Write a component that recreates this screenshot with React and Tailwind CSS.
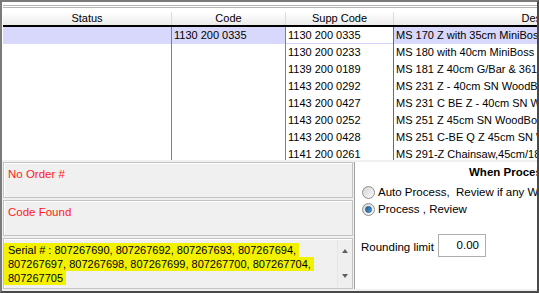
const rows = [
  ["1130 200 0335", "MS 170 Z with 35cm MiniBoss Saw Chain"],
  ["1130 200 0233", "MS 180 with 40cm MiniBoss Saw Chain"],
  ["1139 200 0189", "MS 181 Z 40cm G/Bar & 3610 Chain"],
  ["1143 200 0292", "MS 231 Z - 40cm SN WoodBoss"],
  ["1143 200 0427", "MS 231 C BE Z - 40cm SN WoodBoss"],
  ["1143 200 0252", "MS 251 Z 45cm SN WoodBoss"],
  ["1143 200 0428", "MS 251 C-BE Q Z 45cm SN WoodBoss"],
  ["1141 200 0261", "MS 291-Z Chainsaw,45cm/18\" Bar"],
];

function Radio({ checked, label }) {
  return (
    <div className="flex items-center h-[17px]">
      <div className="w-[13px] h-[13px] rounded-full border border-[#8f8f8f] bg-gradient-to-br from-[#d4d4d4] to-[#fafafa] flex items-center justify-center shrink-0">
        {checked && (
          <div className="w-[7px] h-[7px] rounded-full bg-gradient-to-br from-[#1e5a8c] to-[#4aa3e8] border border-[#2a5d86]" />
        )}
      </div>
      <span className="ml-[3px] whitespace-pre text-[11.5px]">{label}</span>
    </div>
  );
}

export default function App() {
  return (
    <div className="w-[539px] h-[293px] overflow-hidden bg-[#f0f0f0] border-t-2 border-l-2 border-t-[#7a7a7a] border-l-[#7a7a7a] border-r-2 border-b-2 border-r-[#4a4a4a] border-b-[#4a4a4a] flex flex-col text-[11px] leading-[13px] text-black font-['Liberation_Sans',Arial,sans-serif]">
      {/* top strip + table */}
      <div className="bg-white pl-[1px] flex flex-col">
        <div className="h-[10px] flex flex-col">
          <div className="mt-[3px] h-px bg-[#b4b4b4]" />
          <div className="mt-px h-px bg-[#b4b4b4]" />
        </div>
        {/* header */}
        <div className="flex h-[13px] bg-gradient-to-b from-white to-[#ececec] whitespace-nowrap overflow-hidden">
          <div className="w-[169px] shrink-0 border-r border-[#dcdcdc] text-center">Status</div>
          <div className="w-[114px] shrink-0 border-r border-[#dcdcdc] text-center">Code</div>
          <div className="w-[108px] shrink-0 border-r border-[#dcdcdc] text-center">Supp Code</div>
          <div className="w-[310px] shrink-0 text-center">Description</div>
        </div>
        <div className="h-[2px] bg-black" />
        {/* body */}
        <div className="flex h-[133px] overflow-hidden whitespace-nowrap">
          <div className="w-[169px] shrink-0 border-r border-[#808080]">
            <div className="h-[17px] bg-[#d8d8fc]" />
          </div>
          <div className="w-[114px] shrink-0 border-r border-[#808080]">
            <div className="h-[17px] bg-[#d8d8fc] pl-[2px] flex items-center">1130 200 0335</div>
          </div>
          <div className="w-[108px] shrink-0 border-r border-[#6a6a6a]">
            {rows.map(([c], i) => (
              <div
                key={i}
                className={
                  i === 0
                    ? "h-[17px] pl-[2px] flex items-center border-b border-[#d4d4f8]"
                    : "h-[17px] pl-[2px] flex items-center"
                }
              >
                {c}
              </div>
            ))}
          </div>
          <div className="w-[310px] shrink-0">
            {rows.map(([, d], i) => (
              <div
                key={i}
                className={
                  i === 0
                    ? "h-[17px] pl-[2px] flex items-center bg-[#d8d8fc]"
                    : "h-[17px] pl-[2px] flex items-center"
                }
              >
                {d}
              </div>
            ))}
          </div>
        </div>
      </div>

      {/* bottom area */}
      <div className="mt-[2px] h-[127px] flex pl-[1px]">
        <div className="w-[350px] shrink-0 flex flex-col gap-[2px]">
          <div className="h-[36px] border border-[#c3c3c3] shadow-[inset_1px_1px_0_#ffffff] pl-[4px] pt-[5px] text-[11.5px] text-[#ff1a1a]">
            No Order #
          </div>
          <div className="h-[36px] border border-[#c3c3c3] shadow-[inset_1px_1px_0_#ffffff] pl-[4px] pt-[5px] text-[11.5px] text-[#ff1a1a]">
            Code Found
          </div>
          <div className="flex-1 border border-[#c3c3c3] shadow-[inset_1px_1px_0_#ffffff] flex">
            <div className="flex-1 pt-[4px] pr-[8px] text-[11px] leading-[14px]">
              <span className="bg-[#f2f200] box-decoration-clone pl-[4px] pr-[3px] py-[1px]">
                Serial # : 807267690, 807267692, 807267693, 807267694, 807267697, 807267698, 807267699, 807267700, 807267704, 807267705
              </span>
            </div>
            <div className="w-[14px] mr-[1px] my-[1px] bg-[#efefef] border-l border-[#e6e6e6] flex flex-col items-center justify-between py-[9px]">
              <div className="w-0 h-0 border-l-[3.5px] border-r-[3.5px] border-b-[4px] border-l-transparent border-r-transparent border-b-[#606060]" />
              <div className="w-0 h-0 border-l-[3.5px] border-r-[3.5px] border-t-[4px] border-l-transparent border-r-transparent border-t-[#606060]" />
            </div>
          </div>
        </div>
        <div className="ml-[1px] flex-1 bg-white border-l border-[#a0a0a0] overflow-hidden flex flex-col">
          <div className="pt-[4px] pl-[114px] font-bold text-[11.5px] whitespace-nowrap">When Processing Order</div>
          <div className="mt-[5px] pl-[7px] flex flex-col">
            <Radio label="Auto Process,  Review if any Warnings" />
            <Radio checked label="Process , Review" />
          </div>
          <div className="mt-[16px] pl-[6px] flex items-center">
            <span className="w-[77px] shrink-0 text-[11.5px] pt-[3px] whitespace-nowrap">Rounding limit</span>
            <div className="w-[48px] h-[23px] border border-[#adadad] flex items-center justify-end pr-[6px] text-[11.5px]">0.00</div>
          </div>
        </div>
      </div>
    </div>
  );
}
